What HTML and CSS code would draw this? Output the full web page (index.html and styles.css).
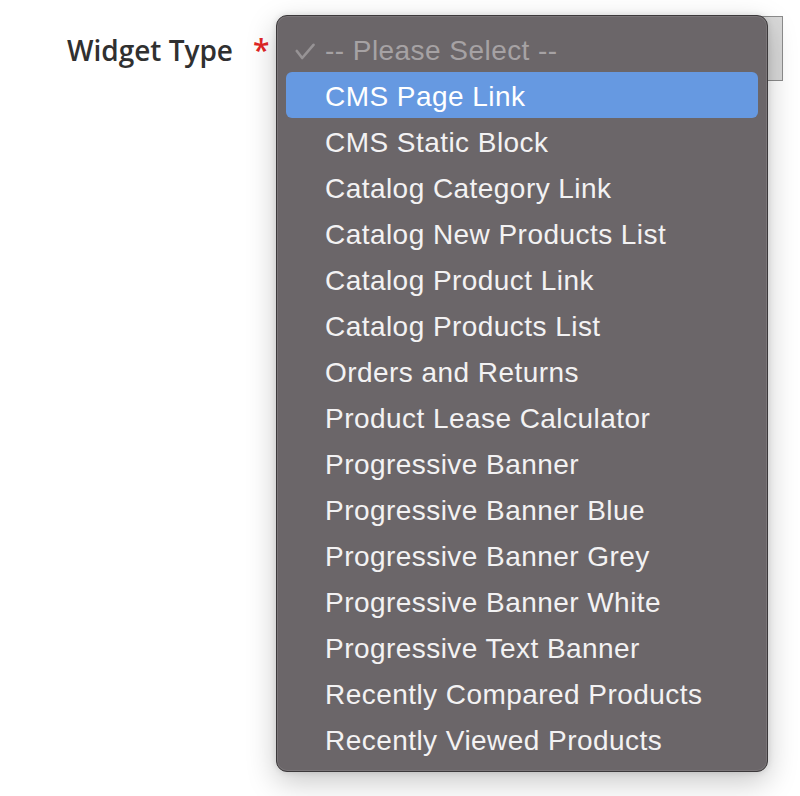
FILE: index.html
```html
<!DOCTYPE html>
<html>
<head>
<meta charset="utf-8">
<link rel="stylesheet" href="styles.css">
</head>
<body>
<div class="form-row">
  <label class="label">Widget Type</label>
  <span class="required">*</span>
  <div class="field">
    <div class="select"></div>
    <div class="menu">
      <div class="opt placeholder">
        <svg class="check" width="20" height="17" viewBox="0 0 20 17"><polyline points="1.8,8 7.2,15 18.5,1.8" fill="none" stroke="#979395" stroke-width="2.6" stroke-linecap="round" stroke-linejoin="round"/></svg>
        <span>-- Please Select --</span>
      </div>
      <div class="opt active">CMS Page Link</div>
      <div class="opt">CMS Static Block</div>
      <div class="opt">Catalog Category Link</div>
      <div class="opt">Catalog New Products List</div>
      <div class="opt">Catalog Product Link</div>
      <div class="opt">Catalog Products List</div>
      <div class="opt">Orders and Returns</div>
      <div class="opt">Product Lease Calculator</div>
      <div class="opt">Progressive Banner</div>
      <div class="opt">Progressive Banner Blue</div>
      <div class="opt">Progressive Banner Grey</div>
      <div class="opt">Progressive Banner White</div>
      <div class="opt">Progressive Text Banner</div>
      <div class="opt">Recently Compared Products</div>
      <div class="opt">Recently Viewed Products</div>
    </div>
  </div>
</div>
</body>
</html>
```
FILE: styles.css
```css
html, body {
  margin: 0;
  padding: 0;
  background: #ffffff;
}
body {
  min-height: 796px;
}
.form-row {
  display: flex;
  align-items: flex-start;
  padding-top: 17px;
}
.label {
  width: 233px;
  text-align: right;
  font-family: "Open Sans", sans-serif;
  font-weight: 600;
  font-size: 28px;
  line-height: 66px;
  color: #303030;
}
.required {
  width: 52px;
  box-sizing: border-box;
  padding-left: 20px;
  font-family: "Open Sans", sans-serif;
  font-weight: 600;
  font-size: 30px;
  line-height: 66px;
  color: #e22626;
}
.field {
  position: relative;
  width: 498px;
  margin-top: -1px;
}
.select {
  height: 65px;
  box-sizing: border-box;
  border: 1px solid #8c8c8c;
  background: #d9d9d9;
}
.menu {
  position: absolute;
  left: -9px;
  top: -1px;
  width: 492px;
  height: 757px;
  box-sizing: border-box;
  padding: 10px 9px 0 9px;
  background: #6b6669;
  border: 1px solid #3c393b;
  border-radius: 11px;
  box-shadow: inset 0 0 0 1px rgba(255,255,255,0.10), 0 10px 30px rgba(0,0,0,0.22), 0 0 6px rgba(0,0,0,0.12);
  font-family: "Liberation Sans", Arial, sans-serif;
  font-size: 28px;
  color: #f3f2f3;
}
.opt {
  height: 46px;
  box-sizing: border-box;
  padding-top: 2px;
  line-height: 46px;
  padding-left: 39px;
  white-space: nowrap;
  letter-spacing: 0.45px;
}
.opt.placeholder {
  display: flex;
  align-items: flex-start;
  padding-left: 9px;
  color: #a6a2a4;
}
.check {
  width: 20px;
  height: 17px;
  margin-top: 15px;
  margin-right: 10px;
  flex: none;
}
.opt.active {
  background: #6699e1;
  color: #ffffff;
  border-radius: 6px;
}
```
